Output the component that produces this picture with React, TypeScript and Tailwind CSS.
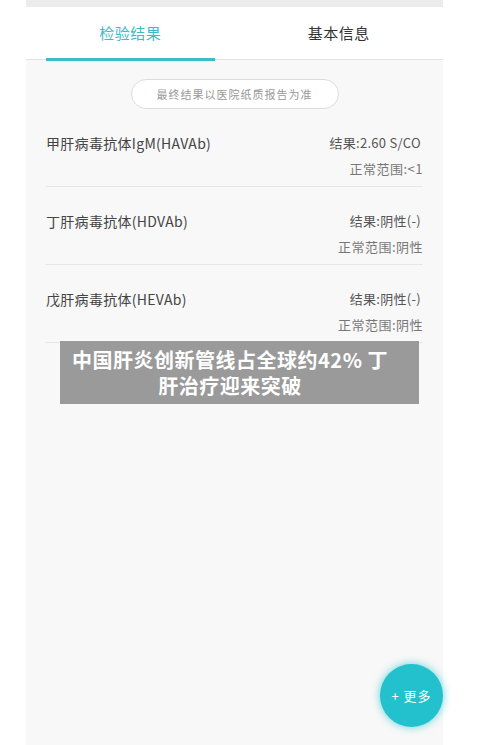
import React from 'react';

// 检验结果列表数据
const results = [
  { name: '甲肝病毒抗体IgM(HAVAb)', result: '结果:2.60 S/CO', range: '正常范围:<1' },
  { name: '丁肝病毒抗体(HDVAb)', result: '结果:阴性(-)', range: '正常范围:阴性' },
  { name: '戊肝病毒抗体(HEVAb)', result: '结果:阴性(-)', range: '正常范围:阴性' },
];

export default function App() {
  return (
    <div className="min-h-screen bg-white font-['Noto_Sans_CJK_SC','Noto_Sans',sans-serif]">
      <div className="relative ml-[26px] w-[417px] min-h-[745px] bg-[#f8f8f8] flex flex-col">
        <div className="h-[7px] bg-[#ececec]" />

        {/* Tabs */}
        <div className="flex h-[53px] bg-white border-b border-[#e2e2e2]">
          <div className="relative flex-1 flex items-center justify-center">
            <span className="text-[15px] tracking-[0.5px] text-[#3cbcc8]">检验结果</span>
            <div className="absolute left-[20px] right-[20px] bottom-[-2px] h-[3px] bg-[#3cbcc8]" />
          </div>
          <div className="flex-1 flex items-center justify-center">
            <span className="text-[15px] tracking-[0.5px] text-[#333]">基本信息</span>
          </div>
        </div>

        {/* 提示 */}
        <div className="mt-[19px] mx-auto w-[208px] h-[30px] rounded-full border border-[#dcdcdc] bg-white flex items-center justify-center">
          <span className="text-[11px] tracking-[1px] text-[#999]">最终结果以医院纸质报告为准</span>
        </div>

        {/* 结果列表 */}
        <div className="px-[20px]">
          {results.map((r) => (
            <div key={r.name} className="flex justify-between pt-[26px] pb-[9px] border-b border-[#e6e6e6]">
              <div className="text-[14px] leading-[16px] tracking-[0.3px] text-[#444]">{r.name}</div>
              <div className="flex flex-col items-end">
                <div className="pr-[2px] text-[13px] leading-[16px] tracking-[0.3px] text-[#555]">{r.result}</div>
                <div className="mt-[10px] text-[13px] leading-[16px] tracking-[0.5px] text-[#777]">{r.range}</div>
              </div>
            </div>
          ))}
        </div>

        {/* 标题水印 */}
        <div className="absolute left-[34px] top-[341px] w-[359px] h-[63px] bg-[#9a9a9a] pl-[10px] pr-[29px] flex items-center justify-center">
          <p className="text-center text-white font-bold text-[20px] leading-[26px] tracking-[0.5px]">
            中国肝炎创新管线占全球约42% 丁肝治疗迎来突破
          </p>
        </div>

        {/* 更多按钮 */}
        <button className="absolute left-[354px] top-[664px] w-[63px] h-[63px] rounded-full bg-[#22c1cd] shadow-[0_0_8px_rgba(34,193,205,0.7)] flex items-center justify-center text-white text-[13px] tracking-[1px]">
          + 更多
        </button>
      </div>
    </div>
  );
}
